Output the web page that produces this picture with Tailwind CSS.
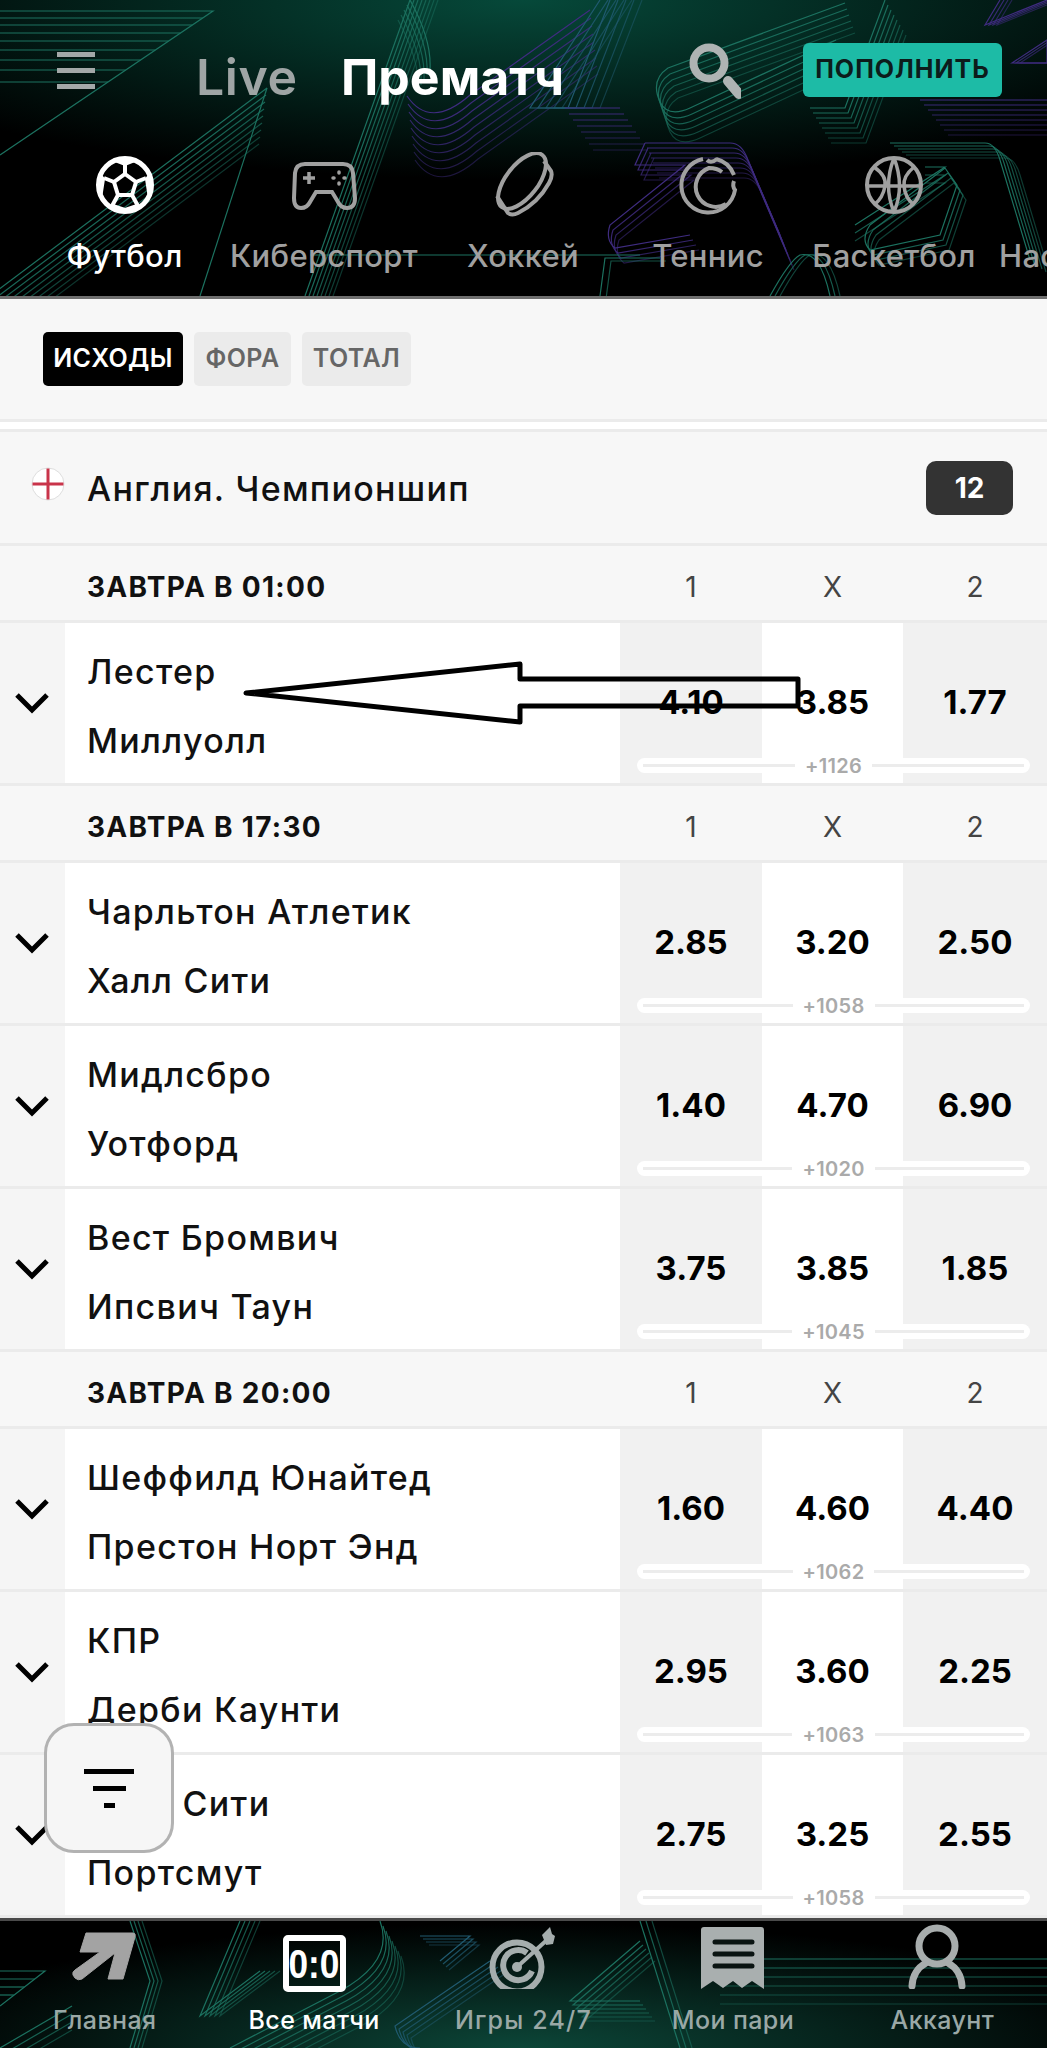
<!DOCTYPE html>
<html lang="ru">
<head>
    <meta charset="UTF-8">
    <title>Прематч</title>
    <script src="https://cdn.jsdelivr.net/npm/@tailwindcss/browser@4"></script>
</head>
<body class="font-['Inter',sans-serif] bg-[#f7f7f7]">
<div class="relative w-[1047px] h-[2048px] overflow-hidden flex flex-col">

    <!-- Header -->
    <header class="relative h-[299px] shrink-0 border-b-[3px] border-[#6f6f6f] overflow-hidden bg-[radial-gradient(ellipse_760px_180px_at_50%_0,#06493a,#000)]">
        <svg id="headerBg" class="absolute inset-0" width="1047" height="296" viewBox="0 0 1047 296" fill="none"></svg>

        <div class="relative flex items-center mt-[43px] h-[54px]">
            <div class="flex flex-col gap-[11px] ml-[57px] w-[38px]">
                <div class="h-[5px] bg-[#a3a8a8]"></div>
                <div class="h-[5px] bg-[#a3a8a8]"></div>
                <div class="h-[5px] bg-[#a3a8a8]"></div>
            </div>
            <span class="ml-[101px] w-[145px] text-[50px] font-semibold leading-none text-[#9fa5a5] mt-[14px] tracking-[0.6px]">Live</span>
            <span class="w-[338px] text-[50px] font-bold leading-none text-white mt-[14px]">Прематч</span>
            <svg class="-mt-[2px]" width="62" height="62" viewBox="676 35 62 62" fill="none" stroke="#aeb3b3">
                <circle cx="706" cy="60" r="15.5" stroke-width="8"/>
                <path d="M725 78 L736 91" stroke-width="10" stroke-linecap="round"/>
            </svg>
            <div class="ml-[62px] w-[199px] h-[54px] rounded-[6px] bg-[#1dbba6] flex items-center justify-center text-[25px] font-bold text-[#0c1c1b] tracking-[1px]">ПОПОЛНИТЬ</div>
        </div>

        <div class="relative flex mt-[55px] ml-[25px] text-[31px] font-medium text-[#a0a0a0] tracking-[0.3px] whitespace-nowrap">
            <div class="w-[199px] shrink-0 flex flex-col items-center text-white">
                <svg width="70" height="66" viewBox="90 152 70 66" fill="none" stroke="#fff" stroke-width="5">
                    <circle cx="125" cy="185" r="26.5"/>
                    <path d="M125 174 L136 182 L132 195 L118 195 L114 182 Z" stroke-width="4"/>
                    <path d="M125 174 V164 M136 182 L146 178 M132 195 L138 206 M118 195 L112 206 M114 182 L104 178" stroke-width="4"/>
                    <path d="M115 161 L125 165 L135 161 L128 158 H122 Z M149 175 L146 179 L148 192 L152 186 Z M101 175 L104 179 L102 192 L98 186 Z M113 205 L125 209 L137 205 L130 212 H120 Z" fill="#fff" stroke-width="2"/>
                </svg>
                <span class="leading-none mt-[22px]">Футбол</span>
            </div>
            <div class="w-[200px] shrink-0 flex flex-col items-center">
                <svg width="70" height="66" viewBox="288 152 70 66" fill="none" stroke="#a0a0a0" stroke-width="4">
                    <path d="M304 164 H342 Q351 164 352 173 L354 198 Q354 208 346 208 Q340 208 337 202 L331 192 H315 L309 202 Q306 208 300 208 Q293 208 293 198 L294 173 Q295 164 304 164 Z"/>
                    <path d="M302 178 H314 M308 172 V184" stroke-width="3.5"/>
                    <path d="M338 172 v1 M338 183 v1 M332 178 h1 M343 178 h1" stroke-width="3.5" stroke-linecap="round"/>
                </svg>
                <span class="leading-none mt-[22px]">Киберспорт</span>
            </div>
            <div class="w-[198px] shrink-0 flex flex-col items-center">
                <svg width="70" height="66" viewBox="488 152 70 66" fill="none" stroke="#a0a0a0" stroke-width="4">
                    <ellipse cx="522" cy="181" rx="33" ry="16" transform="rotate(-52 522 181)"/>
                    <path d="M497 196 L508 213 Q512 216 518 213 Q538 203 549 183 Q553 176 551 171 L544 161"/>
                </svg>
                <span class="leading-none mt-[22px]">Хоккей</span>
            </div>
            <div class="w-[172px] shrink-0 flex flex-col items-center">
                <svg width="70" height="66" viewBox="672 152 70 66" fill="none" stroke="#a0a0a0" stroke-width="4">
                    <path d="M702 159 A27 27 0 1 0 734 190 Q731 186 733 181 M715 159 Q728 162 733 175"/>
                    <path d="M706 160 Q710 164 716 159 M725 204 A20 20 0 1 1 708 168 Q716 168 721 172"/>
                </svg>
                <span class="leading-none mt-[22px]">Теннис</span>
            </div>
            <div class="w-[200px] shrink-0 flex flex-col items-center">
                <svg width="70" height="66" viewBox="856 152 70 66" fill="none" stroke="#a0a0a0" stroke-width="4">
                    <circle cx="891" cy="185" r="27"/>
                    <path d="M864 186 H918 M891 158 Q880 186 891 212 M891 158 Q902 186 891 212 M871 167 Q884 176 882 186 Q880 198 871 205 M911 167 Q900 176 901 186 Q902 198 911 205" stroke-width="3.5"/>
                </svg>
                <span class="leading-none mt-[22px]">Баскетбол</span>
            </div>
            <div class="shrink-0 self-end ml-[5px] leading-none">Настольный теннис</div>
        </div>
    </header>

    <!-- Market tabs -->
    <section class="h-[120px] shrink-0 pt-[33px] pl-[43px] flex gap-[11px] items-start font-semibold text-[25px] tracking-[0.4px]">
        <div class="h-[54px] w-[140px] rounded-[5px] bg-black text-white flex items-center justify-center">ИСХОДЫ</div>
        <div class="h-[54px] w-[97px] rounded-[5px] bg-[#ebebeb] text-[#666] flex items-center justify-center">ФОРА</div>
        <div class="h-[54px] w-[109px] rounded-[5px] bg-[#ebebeb] text-[#666] flex items-center justify-center">ТОТАЛ</div>
    </section>
    <div class="h-[13px] shrink-0 bg-white border-y-[3px] border-[#ebebeb]"></div>

    <!-- League -->
    <div class="relative h-[114px] shrink-0 flex items-center border-b-[3px] border-[#ebebeb]">
        <svg class="absolute left-[31px] top-[35px]" width="34" height="34" viewBox="0 0 34 34">
            <circle cx="17" cy="17" r="16" fill="#fff" stroke="#dedede"/>
            <path d="M15.5 1.5 h3 v14 h14 v3 h-14 v14 h-3 v-14 h-14 v-3 h14 z" fill="#c9344a"/>
        </svg>
        <span class="ml-[87px] pt-[2px] text-[34px] font-medium text-[#111] tracking-[1.3px]">Англия. Чемпионшип</span>
        <div class="ml-auto mr-[34px] w-[87px] h-[54px] rounded-[10px] bg-[#333] text-white text-[28px] font-bold flex items-center justify-center">12</div>
    </div>

    <main id="rows" class="flex-1 min-h-0 overflow-hidden"></main>

    <!-- Bottom nav -->
    <nav class="relative h-[130px] shrink-0 border-t-[3px] border-[#4a4a4a] overflow-hidden bg-[radial-gradient(ellipse_640px_125px_at_50%_100%,#0c4638,#000)]">
        <svg id="navBg" class="absolute inset-0" width="1047" height="127" viewBox="0 0 1047 127" fill="none"></svg>
        <div class="relative grid grid-cols-5 text-[25px] font-medium text-[#9aa8a6] tracking-[0.4px]">
            <div class="flex flex-col items-center">
                <svg width="80" height="68" viewBox="65 1926 80 68"><path d="M86 1938 H133 Q136 1938 135 1942 L123 1984 H108 L115 1958 L82 1984 Q78 1986 75 1983 L73 1980 Q72 1977 75 1975 L100 1957 H80 Z" fill="#a3a3a3" stroke="#a3a3a3" stroke-width="1" stroke-linejoin="round"/></svg>
                <span class="leading-none mt-[19px]">Главная</span>
            </div>
            <div class="flex flex-col items-center text-white">
                <div class="mt-[14px] w-[63px] h-[57px] border-[6px] border-white rounded-[5px] flex items-center justify-center">
                    <span class="font-['Liberation_Sans',sans-serif] font-bold text-[40px] leading-none tracking-normal scale-x-[0.88]">0:0</span>
                </div>
                <span class="leading-none mt-[16px]">Все матчи</span>
            </div>
            <div class="flex flex-col items-center">
                <svg width="90" height="68" viewBox="478 1926 90 68" fill="none" stroke="#a5adad">
                    <circle cx="517" cy="1965" r="24.5" stroke-width="6" transform="translate(0 7)"/>
                    <path d="M527 1958 A15 15 0 1 0 532 1976" stroke-width="6"/>
                    <circle cx="517" cy="1972" r="5" fill="#a5adad" stroke="none"/>
                    <path d="M517 1972 L548 1944" stroke-width="4"/>
                    <path d="M542 1940 L550 1932 L552 1939 L555 1941 L553 1949 L546 1950 Z" fill="#a5adad" stroke="none"/>
                </svg>
                <span class="leading-none mt-[19px] tracking-[1.2px]">Игры 24/7</span>
            </div>
            <div class="flex flex-col items-center">
                <svg width="80" height="68" viewBox="691 1926 80 68">
                    <path d="M702 1932 H759 Q762 1932 762 1935 V1994 L750 1986 L740 1993 L731 1986 L721 1993 L711 1986 L699 1994 V1935 Q699 1932 702 1932 Z" fill="#a9afaf"/>
                    <path d="M713 1947 H750 M713 1959 H750 M713 1971 H750" stroke="#0a1412" stroke-width="5" stroke-linecap="round"/>
                </svg>
                <span class="leading-none mt-[19px]">Мои пари</span>
            </div>
            <div class="flex flex-col items-center">
                <svg width="80" height="68" viewBox="901 1926 80 68" fill="none" stroke="#a8adad" stroke-width="7">
                    <circle cx="936" cy="1951" r="18"/>
                    <path d="M911 1991 Q912 1975 925 1968 M961 1991 Q960 1975 947 1968" stroke-linecap="round"/>
                </svg>
                <span class="leading-none mt-[19px]">Аккаунт</span>
            </div>
        </div>
    </nav>

    <!-- Arrow drawn over the first match -->
    <svg class="absolute left-0 top-0 pointer-events-none" width="1047" height="800" viewBox="0 0 1047 800" fill="none">
        <path d="M246 693 L520 664 V679 H798 V706 H520 V722 Z" stroke="#000" stroke-width="5" stroke-linejoin="round"/>
    </svg>

    <!-- Filter button -->
    <div class="absolute left-[44px] top-[1723px] w-[130px] h-[130px] rounded-[30px] bg-[#f6f6f6] border-[3px] border-[#b2b2b2] flex flex-col items-center justify-center gap-[12px]">
        <div class="w-[50px] h-[5px] bg-black"></div>
        <div class="w-[33px] h-[5px] bg-black"></div>
        <div class="w-[11px] h-[5px] bg-black"></div>
    </div>
</div>

<script>
    const groups = [
        { time: 'ЗАВТРА В 01:00', matches: [['Лестер', 'Миллуолл', '4.10', '3.85', '1.77', '+1126']] },
        { time: 'ЗАВТРА В 17:30', matches: [
            ['Чарльтон Атлетик', 'Халл Сити', '2.85', '3.20', '2.50', '+1058'],
            ['Мидлсбро', 'Уотфорд', '1.40', '4.70', '6.90', '+1020'],
            ['Вест Бромвич', 'Ипсвич Таун', '3.75', '3.85', '1.85', '+1045'],
        ] },
        { time: 'ЗАВТРА В 20:00', matches: [
            ['Шеффилд Юнайтед', 'Престон Норт Энд', '1.60', '4.60', '4.40', '+1062'],
            ['КПР', 'Дерби Каунти', '2.95', '3.60', '2.25', '+1063'],
            ['Сток Сити', 'Портсмут', '2.75', '3.25', '2.55', '+1058'],
        ] },
    ];

    function matchRow(m) {
        return `
        <div class="relative h-[163px] flex border-b-[3px] border-[#ebebeb]">
            <div class="w-[65px] bg-[#f5f5f5] flex items-center justify-center pr-[2px]">
                <svg width="36" height="22" viewBox="0 0 36 22" fill="none"><path d="M3 3 L18 18 L33 3" stroke="#000" stroke-width="5"/></svg>
            </div>
            <div class="w-[555px] bg-white pl-[22px] flex flex-col text-[34px] font-medium text-[#111] tracking-[1.3px] leading-none">
                <span class="mt-[32px]">${m[0]}</span>
                <span class="mt-[35px]">${m[1]}</span>
            </div>
            <div class="w-[142px] bg-[#f1f1f1] flex justify-center pt-[63px] text-[33px] font-bold leading-none text-black">${m[2]}</div>
            <div class="w-[141px] bg-white flex justify-center pt-[63px] text-[33px] font-bold leading-none text-black">${m[3]}</div>
            <div class="w-[144px] bg-[#f1f1f1] flex justify-center pt-[63px] text-[33px] font-bold leading-none text-black">${m[4]}</div>
            <div class="absolute left-[637px] top-[135px] w-[393px] h-[15px] rounded-full bg-white flex items-center px-[6px] gap-[10px] text-[20px] font-semibold text-[#aaa]">
                <div class="flex-1 h-[3px] bg-[#ececec]"></div>
                <span class="leading-none tracking-[0.3px]">${m[5]}</span>
                <div class="flex-1 h-[3px] bg-[#ececec]"></div>
            </div>
        </div>`;
    }

    document.getElementById('rows').innerHTML = groups.map(g => `
        <div class="h-[77px] flex items-center pt-[7px] border-b-[3px] border-[#ebebeb]">
            <span class="w-[620px] pl-[87px] text-[28px] font-bold text-[#111] tracking-[1.3px]">${g.time}</span>
            <span class="w-[142px] text-center text-[28px] text-[#444]">1</span>
            <span class="w-[141px] text-center text-[28px] text-[#444]">X</span>
            <span class="w-[144px] text-center text-[28px] text-[#444]">2</span>
        </div>
        ${g.matches.map(matchRow).join('')}`).join('');

    // background line art: each shape is repeated with an offset
    function stack(svg, d, color, n, dx, dy) {
        for (let i = 0; i < n; i++) {
            const p = document.createElementNS('http://www.w3.org/2000/svg', 'path');
            p.setAttribute('d', d);
            p.setAttribute('stroke', color);
            p.setAttribute('stroke-width', 1.2);
            p.setAttribute('opacity', 1 - (i / n) * 0.6);
            p.setAttribute('transform', `translate(${dx * i} ${dy * i})`);
            svg.appendChild(p);
        }
    }

    const teal = '#1c7260', blue = '#205a70', purple = '#3f2c80';
    const hb = document.getElementById('headerBg');
    // top-left wedge
    stack(hb, 'M0 11 H213 L0 155', teal, 1, 0, 0);
    [18, 25, 33, 41, 50, 60, 70, 82].forEach(y => stack(hb, `M0 ${y} H${213 - (y - 11) * 1.48}`, teal, 1, 0, 0));
    // centre-left spikes
    stack(hb, 'M267 88 L-10 296', teal, 9, -1, 7);
    stack(hb, 'M267 88 L200 296', teal, 1, 0, 0);
    stack(hb, 'M410 0 L305 296', teal, 8, 4, 0);
    stack(hb, 'M410 0 Q432 40 430 70', teal, 5, -3, 5);
    // purple fold under the title
    stack(hb, 'M407 96 Q430 130 470 95 L590 10', purple, 9, 1, 8);
    // blue stripes
    stack(hb, 'M600 0 L530 108 H568 L610 0', blue, 5, 8, 0);
    stack(hb, 'M565 108 H620', purple, 8, 4, 6);
    // big seven, centre
    stack(hb, 'M845 3 L668 68 Q650 80 660 102 Q668 118 690 108 L836 40', teal, 6, 2, 6);
    stack(hb, 'M810 108 H845 L885 0', teal, 8, 3, 5);
    stack(hb, 'M645 143 H730 Q742 143 748 160 L780 235', purple, 8, 2, 5);
    stack(hb, 'M645 143 L635 165 H685 L610 225 Q605 240 615 248 L690 235', purple, 4, 3, 5);
    // big seven, right
    stack(hb, 'M890 143 H985 Q995 143 1000 160 L1030 260', teal, 6, 4, 3);
    stack(hb, 'M945 168 L870 225 Q860 240 870 250 L940 235 L957 185 Z', teal, 4, 3, 5);
    stack(hb, 'M925 167 H945 L855 225', teal, 3, 0, 8);
    stack(hb, 'M920 100 H1047', purple, 8, 4, 5);
    stack(hb, 'M1000 0 L985 25 L1047 0', purple, 4, 4, 0);
    stack(hb, 'M1012 63 L1047 40 V63 Z', purple, 3, 4, 0);
    // bottom pieces
    stack(hb, 'M600 296 L605 258 H660', teal, 2, 6, 3);
    stack(hb, 'M770 296 Q790 260 800 255 Q820 250 830 296', teal, 3, 5, 0);
    stack(hb, 'M310 255 H640', teal, 1, 0, 0);

    const nb = document.getElementById('navBg');
    stack(nb, 'M0 50 H45 L0 85', teal, 1, 0, 0);
    [58, 66, 74].forEach(y => stack(nb, `M0 ${y} H${45 - (y - 50) * 1.3}`, teal, 1, 0, 0));
    stack(nb, 'M130 0 L150 60 L130 127', teal, 4, 4, 0);
    stack(nb, 'M72 85 L0 127', teal, 4, 0, 8);
    stack(nb, 'M240 0 L200 95 L260 50', teal, 5, 5, 0);
    stack(nb, 'M380 0 Q395 40 340 70 L230 127', teal, 8, 3, 5);
    stack(nb, 'M420 15 H470 L440 40', blue, 4, 3, 3);
    stack(nb, 'M490 40 L395 105 Q400 127 420 127', blue, 5, 4, 3);
    stack(nb, 'M640 20 L570 80 H640', teal, 6, 3, 4);
    stack(nb, 'M640 0 L680 127', teal, 3, 6, 0);
    stack(nb, 'M720 38 H1047', teal, 6, 0, 9);
</script>
</body>
</html>
